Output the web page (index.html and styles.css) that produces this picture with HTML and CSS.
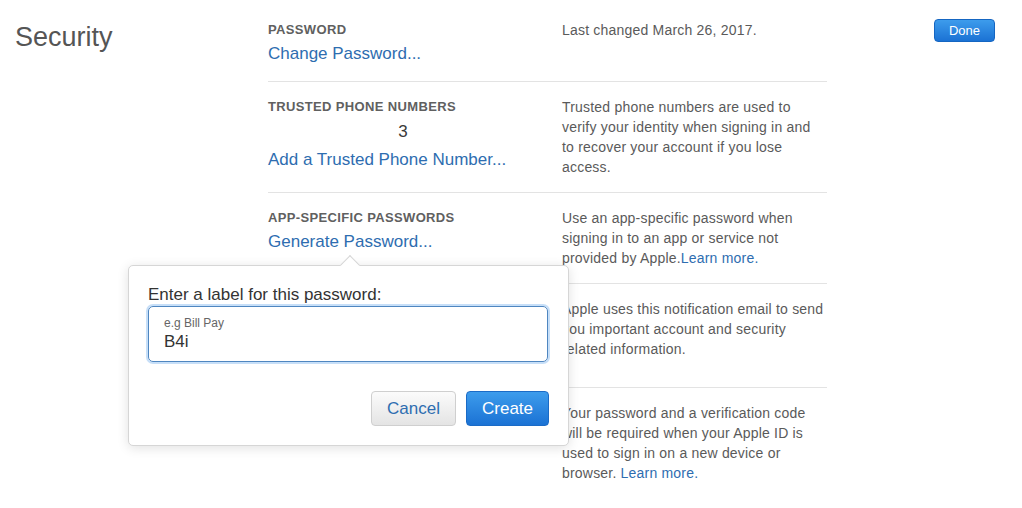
FILE: index.html
```html
<!DOCTYPE html>
<html lang="en">
<head>
<meta charset="utf-8">
<title>Security</title>
<link rel="stylesheet" href="styles.css">
</head>
<body>
<div class="page">
  <h1 class="section-title">Security</h1>
  <div class="rows">
    <div class="row">
      <div class="col-left">
        <div class="label">Password</div>
        <a class="link" href="#">Change Password...</a>
      </div>
      <div class="col-right">Last changed March 26, 2017.</div>
    </div>
    <div class="row">
      <div class="col-left">
        <div class="label">Trusted Phone Numbers</div>
        <div class="count">3</div>
        <a class="link" href="#">Add a Trusted Phone Number...</a>
      </div>
      <div class="col-right">Trusted phone numbers are used to verify your identity when signing in and to recover your account if you lose access.</div>
    </div>
    <div class="row">
      <div class="col-left anchor">
        <div class="label">App-Specific Passwords</div>
        <a class="link" href="#">Generate Password...</a>
        <div class="popover">
          <span class="popover-arrow"></span>
          <label class="popover-title" for="pw-label">Enter a label for this password:</label>
          <div class="field">
            <span class="field-hint">e.g Bill Pay</span>
            <input id="pw-label" class="field-input" type="text" value="B4i">
          </div>
          <div class="actions">
            <button class="btn btn-secondary" type="button">Cancel</button>
            <button class="btn btn-primary" type="button">Create</button>
          </div>
        </div>
      </div>
      <div class="col-right">Use an app-specific password when signing in to an app or service not provided by Apple.<a class="inline-link" href="#">Learn more.</a></div>
    </div>
    <div class="row row-tall">
      <div class="col-left"></div>
      <div class="col-right">Apple uses this notification email to send you important account and security related information.</div>
    </div>
    <div class="row row-last">
      <div class="col-left"></div>
      <div class="col-right">Your password and a verification code will be required when your Apple ID is used to sign in on a new device or browser. <a class="inline-link" href="#">Learn more.</a></div>
    </div>
  </div>
  <button class="btn-done" type="button">Done</button>
</div>
</body>
</html>
```
FILE: styles.css
```css
* { box-sizing: border-box; }

html, body {
  margin: 0;
  padding: 0;
  background: #ffffff;
}

body {
  font-family: "Liberation Sans", Arial, sans-serif;
  color: #555555;
  overflow: hidden;
}

.page {
  display: flex;
  align-items: flex-start;
  padding: 0 27px 0 15px;
  width: 1022px;
  height: 508px;
}

.section-title {
  margin: 21px 0 0 0;
  width: 253px;
  font-size: 27px;
  line-height: 32px;
  font-weight: normal;
  color: #555555;
}

.rows {
  width: 559px;
  padding-top: 5px;
}

.row {
  display: flex;
  padding: 15px 0;
  border-bottom: 1px solid #e3e3e3;
}

.row-tall {
  min-height: 104px;
}

.row-last {
  border-bottom: 0;
}

.col-left {
  width: 270px;
  margin-right: 24px;
  display: flex;
  flex-direction: column;
  align-items: flex-start;
}

.anchor { position: relative; }

.col-right {
  flex: none;
  width: 263px;
  font-size: 14px;
  line-height: 20px;
  letter-spacing: 0.2px;
  color: #5a5a5a;
}

.label {
  font-size: 13px;
  line-height: 20px;
  font-weight: bold;
  letter-spacing: 0.35px;
  text-transform: uppercase;
  color: #606060;
  margin-bottom: 2px;
}

.count {
  align-self: stretch;
  text-align: center;
  font-size: 17px;
  line-height: 24px;
  color: #3a3a3a;
  margin-top: 1px;
  margin-bottom: 4px;
}

.link {
  font-size: 17px;
  line-height: 24px;
  color: #2e6db0;
  text-decoration: none;
}

.inline-link {
  color: #2e6db0;
  text-decoration: none;
}

.btn-done {
  margin: 19px 0 0 auto;
  width: 61px;
  height: 23px;
  padding: 0;
  border: 1px solid #1566c2;
  border-radius: 4px;
  background: linear-gradient(#3d9cec, #1b72d4);
  color: #ffffff;
  font-family: "Liberation Sans", Arial, sans-serif;
  font-size: 13px;
  line-height: 21px;
}

/* Popover */
.popover {
  position: absolute;
  left: -140px;
  top: 57px;
  width: 441px;
  padding: 18px 19px 19px 19px;
  background: #ffffff;
  border: 1px solid #d6d6d6;
  border-radius: 5px;
  box-shadow: 0 2px 12px rgba(0, 0, 0, 0.12);
  z-index: 10;
}

.popover-arrow {
  position: absolute;
  top: -8px;
  left: 214px;
  width: 14px;
  height: 14px;
  background: #ffffff;
  border-top: 1px solid #d6d6d6;
  border-left: 1px solid #d6d6d6;
  transform: rotate(45deg);
}

.popover-title {
  display: block;
  font-size: 17px;
  line-height: 22px;
  color: #333333;
}

.field {
  display: flex;
  flex-direction: column;
  width: 400px;
  height: 56px;
  padding: 8px 15px 0 15px;
  border: 1px solid #4f86c0;
  border-radius: 5px;
  box-shadow: 0 0 0 2px rgba(130, 185, 240, 0.45);
}

.field-hint {
  font-size: 12px;
  line-height: 16px;
  color: #666666;
}

.field-input {
  border: 0;
  outline: none;
  padding: 0;
  margin: 0;
  height: 22px;
  font-family: "Liberation Sans", Arial, sans-serif;
  font-size: 17px;
  line-height: 22px;
  color: #333333;
  background: transparent;
}

.actions {
  display: flex;
  justify-content: flex-end;
  gap: 10px;
  margin-top: 29px;
}

.btn {
  height: 35px;
  padding: 0;
  border-radius: 4px;
  font-family: "Liberation Sans", Arial, sans-serif;
  font-size: 17px;
  line-height: 33px;
}

.btn-secondary {
  width: 85px;
  border: 1px solid #cfcfcf;
  background: linear-gradient(#fbfbfb, #e4e4e4);
  color: #2e6db0;
}

.btn-primary {
  width: 83px;
  border: 1px solid #1b6bc6;
  background: linear-gradient(#3d9cec, #1b72d4);
  color: #ffffff;
}
```
